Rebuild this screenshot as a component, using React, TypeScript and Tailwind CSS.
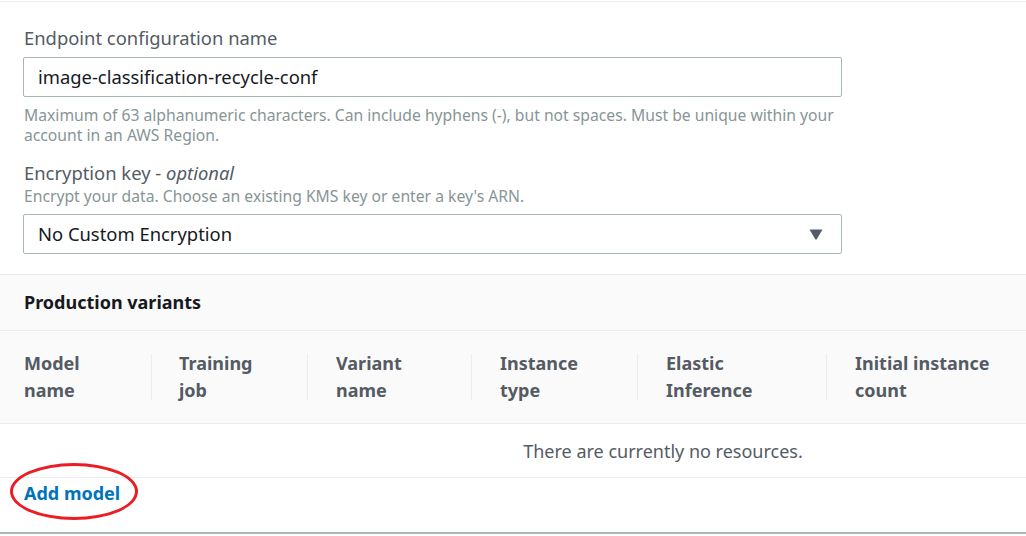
const columns = [
  { w: "w-[151px]", pl: "pl-6", top: "Model", bottom: "name", sep: false },
  { w: "w-[156px]", pl: "pl-[27px]", top: "Training", bottom: "job", sep: true },
  { w: "w-[164px]", pl: "pl-[28px]", top: "Variant", bottom: "name", sep: true },
  { w: "w-[166px]", pl: "pl-[28px]", top: "Instance", bottom: "type", sep: true },
  { w: "w-[189px]", pl: "pl-[28px]", top: "Elastic", bottom: "Inference", sep: true },
  { w: "w-[300px]", pl: "pl-[28px]", top: "Initial instance", bottom: "count", sep: true },
];

export default function App() {
  return (
    <div
      className="w-[1026px] h-[536px] overflow-hidden bg-white"
      style={{ fontFamily: '"Noto Sans", "Open Sans", sans-serif' }}
    >
      {/* ===== Endpoint config form ===== */}
      <div className="mt-px border-t border-[#eaeded] px-[23px] pt-[22px] pb-5">
        <div className="pl-px text-[18.4px] leading-[27px] text-[#545b64]">
          Endpoint configuration name
        </div>
        <div className="mt-[6px] w-[819px] h-10 flex items-center rounded-[2px] border border-[#aab7b8] px-[14px] text-[18.4px] text-[#16191f]">
          image-classification-recycle-conf
        </div>
        <p className="mt-2 pl-px w-[830px] text-[15.7px] leading-5 text-[#879596]">
          Maximum of 63 alphanumeric characters. Can include hyphens (-), but not spaces. Must be
          unique within your account in an AWS Region.
        </p>

        <div className="mt-[14px] pl-px text-[18.4px] leading-[27px] text-[#545b64]">
          Encryption key - <i>optional</i>
        </div>
        <div className="pl-px text-[15.7px] leading-5 text-[#879596]">
          Encrypt your data. Choose an existing KMS key or enter a key's ARN.
        </div>
        <div className="mt-2 w-[819px] h-10 flex items-center justify-between rounded-[2px] border border-[#aab7b8] pl-[14px] pr-[18px] text-[18.4px] text-[#16191f]">
          <span className="-mt-px">No Custom Encryption</span>
          <svg width="14" height="11" viewBox="0 0 14 11">
            <path d="M0.5 0.5 H13.5 L7.6 10.5 H6.4 Z" fill="#545b64" />
          </svg>
        </div>
      </div>

      {/* ===== Production variants ===== */}
      <div className="border-t border-[#eaeded] bg-[#fafafa] h-[56px] flex items-center px-6">
        <h2 className="text-[18px] font-bold text-[#16191f]">Production variants</h2>
      </div>

      <div className="w-[1326px]">
        <div className="flex border-t border-b border-[#eaeded] bg-[#fafafa] h-[94px] items-center">
          {columns.map((c) => (
            <div key={c.top} className={`${c.w} flex items-stretch`}>
              {c.sep && <div className="w-px bg-[#eaeded] my-[4px]" />}
              <div
                className={`${c.pl} text-[18px] font-bold leading-[27px] text-[#545b64] whitespace-nowrap`}
              >
                <div>{c.top}</div>
                <div>{c.bottom}</div>
              </div>
            </div>
          ))}
        </div>

        <div className="h-[54px] border-b border-[#eaeded] flex items-center justify-center pt-[1px] text-[18px] text-[#545b64]">
          There are currently no resources.
        </div>
      </div>

      {/* ===== Add model ===== */}
      <div className="relative h-[56px] border-b-2 border-[#aab7b8] px-6">
        <a className="block leading-[27px] pt-[2px] text-[18px] font-bold text-[#0073bb]">
          Add model
        </a>
        {/* annotation ring */}
        <div className="absolute left-[10px] top-[-15px] w-[128px] h-[57px] rounded-[50%] border-[3px] border-[#ec1c24]" />
      </div>
    </div>
  );
}
